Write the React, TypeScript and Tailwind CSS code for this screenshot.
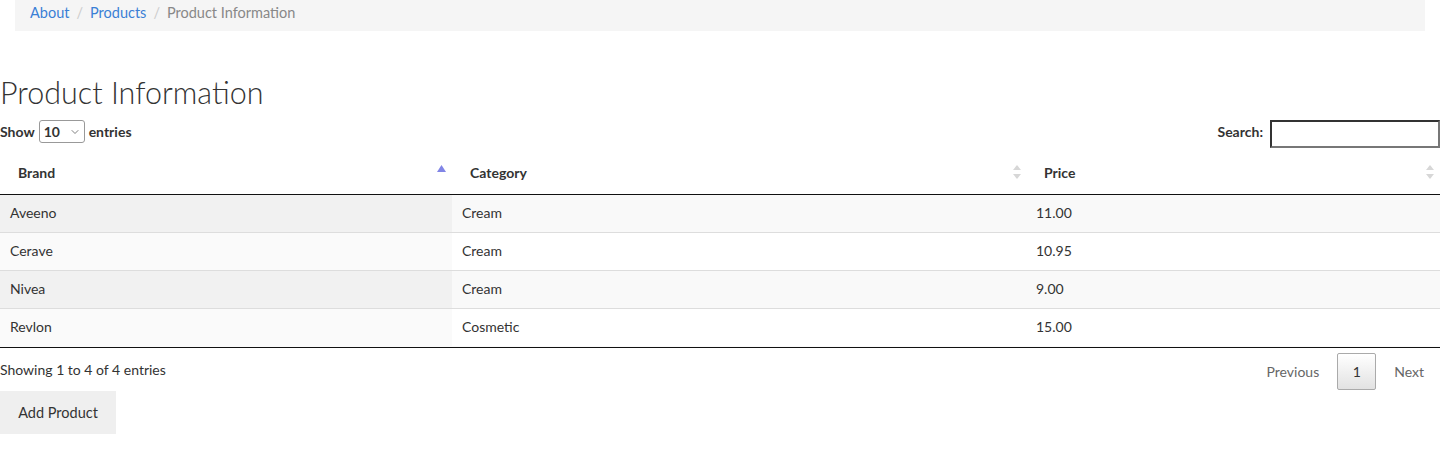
import { ChevronDown } from "lucide-react";

const rows = [
  { brand: "Aveeno", category: "Cream", price: "11.00" },
  { brand: "Cerave", category: "Cream", price: "10.95" },
  { brand: "Nivea", category: "Cream", price: "9.00" },
  { brand: "Revlon", category: "Cosmetic", price: "15.00" },
];

function SortBoth() {
  return (
    <svg width="8" height="14" viewBox="0 0 8 14">
      <path d="M4 0 L8 5 L0 5 Z" fill="#d7d7d7" />
      <path d="M4 14 L8 9 L0 9 Z" fill="#d7d7d7" />
    </svg>
  );
}

function SortAsc() {
  return (
    <svg width="9" height="7" viewBox="0 0 9 7">
      <path d="M4.5 0 L9 7 L0 7 Z" fill="#8185e6" />
    </svg>
  );
}

export default function App() {
  return (
    <div className="w-[1440px] h-[458px] overflow-hidden bg-white text-[#333] font-['Lato',sans-serif] text-[14px]">
      {/* Breadcrumb */}
      <div className="mx-[15px] h-[34px] bg-[#f5f5f5] flex items-center px-[15px] -mt-[3px] pb-[2px] text-[14.5px]">
        <span className="text-[#3a7fd5]">About</span>
        <span className="text-[#ccc] px-[7px]">/</span>
        <span className="text-[#3a7fd5]">Products</span>
        <span className="text-[#ccc] px-[7px]">/</span>
        <span className="text-[#888]">Product Information</span>
      </div>

      <h1 className="mt-[43px] text-[30.5px] font-light leading-[36px] text-[#333]">Product Information</h1>

      {/* Controls */}
      <div className="flex items-center justify-between mt-[6px] h-[30px]">
        <div className="flex items-center gap-[4px] font-bold">
          <span>Show</span>
          <div className="relative w-[46px] h-[23px] border border-[#999] rounded-[3px] flex items-center pl-[4px] bg-white">
            <span>10</span>
            <ChevronDown size={12} strokeWidth={1.5} className="absolute right-[3px] top-[5px] text-[#555]" />
          </div>
          <span>entries</span>
        </div>
        <div className="flex items-center gap-[7px] font-bold">
          <span>Search:</span>
          <div className="w-[170px] h-[28px] mt-[5px] border-2 border-[#333] border-r-[#777] border-b-[#777] bg-white" />
        </div>
      </div>

      {/* Table */}
      <table className="w-full border-collapse mt-[8px]">
        <thead>
          <tr className="h-[40px] border-b border-[#111]">
            <th className="w-[452px] text-left pl-[18px] pb-[2px] relative">
              Brand
              <span className="absolute right-[6px] top-[11px]"><SortAsc /></span>
            </th>
            <th className="w-[575px] text-left pl-[18px] pb-[2px] relative">
              Category
              <span className="absolute right-[6px] top-[11px]"><SortBoth /></span>
            </th>
            <th className="text-left pl-[17px] pb-[2px] relative">
              Price
              <span className="absolute right-[6px] top-[11px]"><SortBoth /></span>
            </th>
          </tr>
        </thead>
        <tbody>
          {rows.map((r, i) => (
            <tr key={r.brand} className={`h-[38px] ${i > 0 ? "border-t border-[#ddd]" : ""} ${i % 2 === 0 ? "bg-[#f9f9f9]" : "bg-white"}`}>
              <td className={`pl-[10px] pb-[1px] ${i % 2 === 0 ? "bg-[#f1f1f1]" : "bg-[#fafafa]"}`}>{r.brand}</td>
              <td className="pl-[10px] pb-[1px]">{r.category}</td>
              <td className="pl-[9px] pb-[1px]">{r.price}</td>
            </tr>
          ))}
        </tbody>
      </table>
      <div className="h-[1px] bg-[#fafafa]" />
      <div className="border-t border-[#111]" />

      {/* Footer */}
      <div className="flex items-start justify-between">
        <div className="pt-[11px]">Showing 1 to 4 of 4 entries</div>
        <div className="flex items-center pt-[5px]">
          <span className="text-[#666] px-[18px]">Previous</span>
          <span className="w-[39px] h-[37px] flex items-center justify-center border border-[#aaa] rounded-[2px] bg-gradient-to-b from-white to-[#e2e2e2]">1</span>
          <span className="text-[#666] pl-[18px] pr-[16px]">Next</span>
        </div>
      </div>
      <button className="mt-[1px] w-[116px] h-[43px] bg-[#efefef] text-[#333] text-[14.5px]">Add Product</button>
    </div>
  );
}
